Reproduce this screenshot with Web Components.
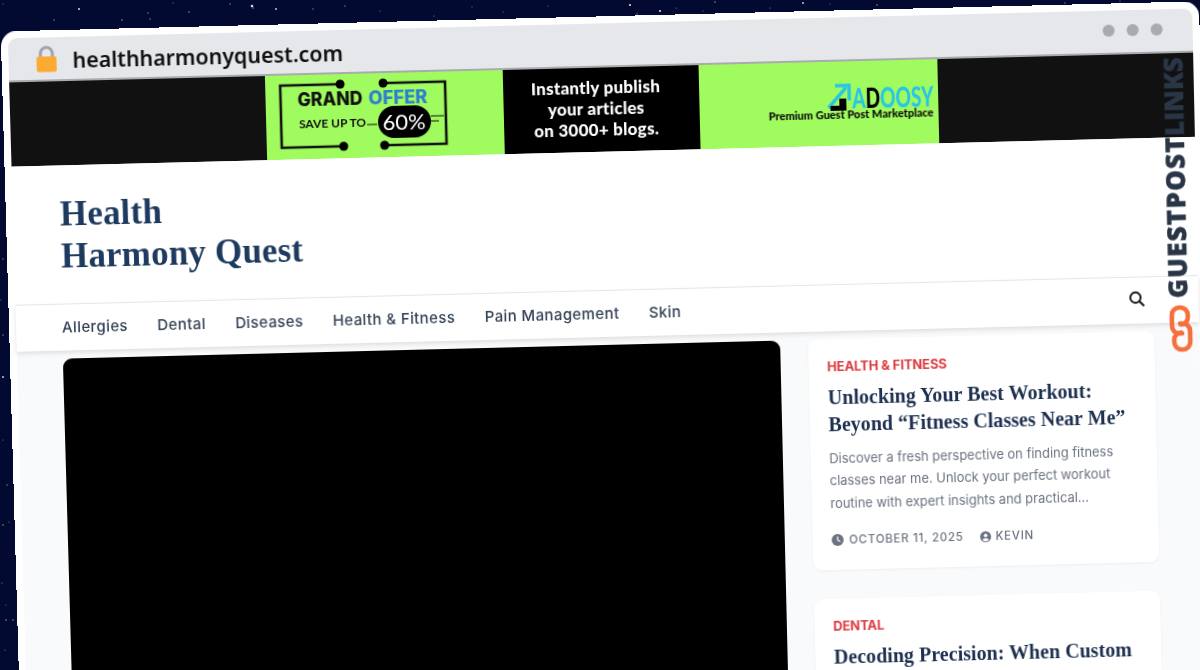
<!DOCTYPE html>
<html lang="en"><head><meta charset="utf-8"><title>healthharmonyquest.com</title>
<style>html,body{margin:0;height:100%;overflow:hidden;background:#030a32}</style></head>
<body>
<star-field></star-field>
<browser-window w="1199" h="700" corners="0.7,31.5 1199,1.3 1214,701 20.5,731">
  <chrome-bar slot="chrome" url="healthharmonyquest.com"></chrome-bar>
  <ad-banner></ad-banner>
  <site-header></site-header>
  <site-nav></site-nav>
  <page-main>
    <video-box></video-box>
    <post-card slot="side" cat="Health &amp; Fitness" date="October 11, 2025" author="Kevin">
      <span slot="title">Unlocking Your Best Workout:<br>Beyond “Fitness Classes Near Me”</span>
      Discover a fresh perspective on finding fitness<br>classes near me. Unlock your perfect workout<br>routine with expert insights and practical...
    </post-card>
    <post-card slot="side" cat="Dental">
      <span slot="title">Decoding Precision: When Custom</span>
    </post-card>
  </page-main>
  <guest-mark></guest-mark>
</browser-window>
<script>
function def(name, css, html, init){
  customElements.define(name, class extends HTMLElement{
    constructor(){super();this.attachShadow({mode:'open'}).innerHTML='<style>'+css+'</style>'+(typeof html==='function'?'':html);}
    connectedCallback(){ if(typeof html==='function'){this.shadowRoot.innerHTML='<style>'+css+'</style>'+html(this);} if(init)init(this);}
  });
}
const SANS='Inter,"Liberation Sans",sans-serif', SERIF='"Liberation Serif",serif';

def('star-field',':host{position:absolute;inset:0;display:block}svg{display:block}','<svg width="1200" height="670"></svg>',el=>{
  const s=[[79,9,1],[252,6,1.3],[253,8,.8],[148,13,.7],[189,12,.8],[276,9,.9],[313,9,.7],[230,4,.7],[122,20,.8],[150,19,.7],[54,20,.7],[3,4,.6],[173,3,.6],[345,6,.7],[380,11,.6],[434,16,.6],[472,7,.5],[630,5,1.1],[660,11,1.1],[715,2,.8],[637,14,.7],[548,6,.6],[503,12,.5],[676,8,.5],[703,11,.6],[803,3,.9],[877,5,.8],[830,4,.6],[770,8,.6],[1065,3,.7],[1120,1,.6],
  [3,377,.9],[7,485,.7],[3,525,.8],[9,522,.6],[2,583,.6],[6,605,.5],[6,620,.8],[13,620,.8],[3,259,.7],[3,335,.7],[1,300,.5],[3,440,.5],[5,650,.6]];
  el.shadowRoot.querySelector('svg').innerHTML=s.map(p=>`<circle cx="${p[0]}" cy="${p[1]}" r="${p[2]}" fill="#dfe4f5" opacity="${p[2]>=.9?.95:.6}"/>`).join('');
});

def('browser-window',`:host{position:absolute;left:0;top:0;display:flex;flex-direction:column;box-sizing:border-box;padding:7px 7px 0;background:#fff;border-radius:15px;overflow:hidden;transform-origin:0 0}
 .body{flex:1;display:flex;flex-direction:column;background:#f8fafc;min-height:0}`,
 '<slot name="chrome"></slot><div class="body"><slot></slot></div>',el=>{
  const W=+el.getAttribute('w'),H=+el.getAttribute('h');
  el.style.width=W+'px';el.style.height=H+'px';
  const [p0,p1,p2,p3]=el.getAttribute('corners').split(' ').map(c=>c.split(',').map(Number));
  const sx=p0[0]-p1[0]+p2[0]-p3[0],sy=p0[1]-p1[1]+p2[1]-p3[1],dx1=p1[0]-p2[0],dx2=p3[0]-p2[0],dy1=p1[1]-p2[1],dy2=p3[1]-p2[1];
  const den=dx1*dy2-dx2*dy1,g=(sx*dy2-dx2*sy)/den,h=(dx1*sy-sx*dy1)/den;
  const a=p1[0]-p0[0]+g*p1[0],b=p3[0]-p0[0]+h*p3[0],d=p1[1]-p0[1]+g*p1[1],e=p3[1]-p0[1]+h*p3[1];
  el.style.transform=`matrix3d(${a/W},${d/W},0,${g/W},${b/H},${e/H},0,${h/H},0,0,1,0,${p0[0]},${p0[1]},0,1)`;
});

def('chrome-bar',`:host{display:flex;align-items:center;box-sizing:border-box;height:44px;background:#e5e7eb;border-bottom:2px solid #a9abae;border-radius:9px 9px 0 0;padding:0 30px 0 27px;flex:none}
 svg{flex:none;display:block}
 .url{font:600 21.4px "Noto Sans","Open Sans",sans-serif;color:#111;margin-left:15px;flex:1;white-space:nowrap;position:relative;top:1px}
 .dots{display:flex;gap:12px;align-self:flex-start;margin-top:14px}.dots i{width:12px;height:12px;border-radius:50%;background:#a8aaad;display:block}`,
 el=>`<svg width="22" height="27" viewBox="0 0 22 27"><path d="M5 12V8a6 6 0 0 1 12 0v4" fill="none" stroke="#9ea3aa" stroke-width="3"/><rect x="1" y="11" width="20" height="15.5" rx="2.2" fill="#fcaa32"/></svg><span class="url">${el.getAttribute('url')}</span><div class="dots"><i></i><i></i><i></i></div>`);

def('ad-banner',`:host{display:flex;justify-content:center;height:84px;background:#111;flex:none}
 .w{display:flex;width:673px}
 .g{background:#a0fb5e;width:238px;flex:none}.g svg{display:block}
 .b{background:#000;width:196px;box-sizing:border-box;padding:0 11px 3px 0;flex:none;display:flex;flex-direction:column;align-items:center;justify-content:center;color:#fff;font:900 17px/21px Lato,sans-serif;letter-spacing:.25px}
 text{font-family:Lato,sans-serif}`,
 `<div class="w"><div class="g"><svg width="238" height="84" viewBox="0 0 238 84">
  <g fill="none" stroke="#111" stroke-width="2.6"><path d="M75 10H15V72H77M118 10H180V72H118"/><path d="M101 51h10M165 44h13M165 49h8" stroke-width="1.2"/></g>
  <g fill="#000"><circle cx="75" cy="10" r="4.5"/><circle cx="118" cy="10" r="4.5"/><circle cx="77" cy="72" r="4.5"/><circle cx="118" cy="72" r="4.5"/>
  <rect x="112" y="33" width="53" height="32" rx="16"/></g>
  <text x="32" y="31" font-size="18.5" font-weight="800" fill="#111" style="font-family:Inter,sans-serif" textLength="65" lengthAdjust="spacingAndGlyphs">GRAND</text>
  <text x="103" y="31" font-size="18.5" font-weight="800" fill="#2d7fd0" style="font-family:Inter,sans-serif" textLength="59" lengthAdjust="spacingAndGlyphs">OFFER</text>
  <text x="33" y="53" font-size="12" font-weight="700" fill="#111" textLength="67" lengthAdjust="spacingAndGlyphs">SAVE UP TO</text>
  <text x="138" y="57" font-size="22" fill="#fff" text-anchor="middle">60%</text></svg></div>
  <div class="b"><span>Instantly publish</span><span>your articles</span><span>on 3000+ blogs.</span></div>
  <div class="g" style="width:239px"><svg width="239" height="84" viewBox="0 0 239 84">
  <path d="M129 46L147 26" stroke="#29c5e6" stroke-width="3.4" fill="none"/><path d="M136 24H150V39" stroke="#29c5e6" stroke-width="3.4" fill="none"/>
  <path d="M131 49h16V37h-7v7h-9z" fill="#000"/>
  <text transform="translate(153 47) scale(.68 1)" font-size="28" font-weight="900"><tspan fill="#29c5e6">A</tspan><tspan fill="#000">D</tspan><tspan fill="#29c5e6">OOSY</tspan></text>
  <text x="69" y="57" font-size="11" font-weight="900" fill="#0b0b0b" textLength="165" lengthAdjust="spacingAndGlyphs">Premium Guest Post Marketplace</text></svg></div></div>`);

def('site-header',`:host{display:flex;flex-direction:column;justify-content:center;box-sizing:border-box;height:139px;background:#fff;padding:2px 0 0 47px;flex:none;border-bottom:1px solid #e8ebef}
 h1{margin:0;font:700 35px/42.5px ${SERIF};color:#1e3a5f;letter-spacing:.2px}`,
 `<h1>Health<br>Harmony Quest</h1>`);

def('site-nav',`:host{display:flex;align-items:center;box-sizing:border-box;height:46px;background:#fff;flex:none;padding:0 53px 2px 46px;box-shadow:0 2px 5px rgba(0,0,0,.12);position:relative;gap:29.5px;font:500 15px ${SANS};color:#334155;letter-spacing:.4px}
 svg{margin-left:auto;margin-top:-1px;display:block}`,
 `<span>Allergies</span><span>Dental</span><span>Diseases</span><span>Health &amp; Fitness</span><span>Pain Management</span><span>Skin</span><svg width="17" height="17" viewBox="0 0 17 17"><circle cx="7" cy="7" r="5.2" fill="none" stroke="#111" stroke-width="1.9"/><path d="M10.8 10.8L15.5 15.5" stroke="#111" stroke-width="2"/></svg>`);

def('page-main',`:host{display:grid;grid-template-columns:719px 347px;gap:27.5px;padding:8px 45.5px 0 46px;align-items:start;flex:1;min-height:0}
 .s{display:flex;flex-direction:column;gap:29px}`,
 `<slot></slot><div class="s"><slot name="side"></slot></div>`);

def('video-box',':host{display:block;height:420px;background:#000;border-radius:9px}','');

def('post-card',`:host{display:block;box-sizing:border-box;background:#fff;border-radius:9px;padding:18px 20px 18px 19px;box-shadow:0 1px 3px rgba(15,23,42,.05);min-height:231px;font:400 12.95px/22.4px ${SANS};color:#6b7280}
 .c{font:700 13px/18px ${SANS};color:#dc3b3f;text-transform:uppercase;letter-spacing:-.1px}
 h3{margin:9px 0 10px;font:700 20px/26.5px ${SERIF};color:#1e3050;letter-spacing:.05px}
 .m{display:flex;gap:17px;margin-top:18px;font:500 11.5px/16px ${SANS};letter-spacing:.75px;text-transform:uppercase;color:#6b7280;align-items:center}
 .m span{display:flex;align-items:center;gap:6px}
 svg{display:block}`,
 el=>{const dt=el.getAttribute('date'),au=el.getAttribute('author');
 return `<div class="c">${el.getAttribute('cat').replace('&','&amp;')}</div><h3><slot name="title"></slot></h3><slot></slot>`+(dt?`<div class="m"><span><svg width="12" height="12" viewBox="0 0 12 12"><circle cx="6" cy="6" r="6" fill="#6b7280"/><path d="M6 2.6V6l2.5 1.7" stroke="#fff" stroke-width="1.2" fill="none"/></svg>${dt}</span><span style="gap:4px"><svg width="11" height="11" viewBox="0 0 12 12"><circle cx="6" cy="6" r="6" fill="#6b7280"/><circle cx="6" cy="4.6" r="2" fill="#fff"/><path d="M2.4 9.6a3.8 3 0 0 1 7.2 0a5 5 0 0 1-7.2 0z" fill="#fff"/></svg>${au}</span></div>`:'');});

def('guest-mark',`:host{position:absolute;left:1159px;top:55px;width:24px;display:flex;flex-direction:column;align-items:center;gap:6px;z-index:5}
 .t{writing-mode:vertical-rl;transform:rotate(180deg);font:800 26px/24px "Open Sans",sans-serif;color:#2a3646;white-space:nowrap;display:block;-webkit-text-stroke:.4px #2a3646}
 .t b{font-weight:800;letter-spacing:1.2px}
 svg{display:block;align-self:flex-start;margin-left:3px}`,
 `<span class="t"><b>GUESTPOST</b>LINKS</span><svg width="24" height="48" viewBox="0 0 24 48"><g fill="none" stroke="#f4703c" stroke-width="4.6" stroke-linecap="round"><path d="M13 29H10.5A7.5 7.5 0 0 1 3 21.5V10.5A7.5 7.5 0 0 1 10.5 3H11.5A7.5 7.5 0 0 1 19 10.5V13A7 7 0 0 1 12 20"/><path d="M13 29H10.5A7.5 7.5 0 0 1 3 21.5V10.5A7.5 7.5 0 0 1 10.5 3H11.5A7.5 7.5 0 0 1 19 10.5V13A7 7 0 0 1 12 20" transform="rotate(180 12 24)"/></g></svg>`);
</script>
</body></html>
